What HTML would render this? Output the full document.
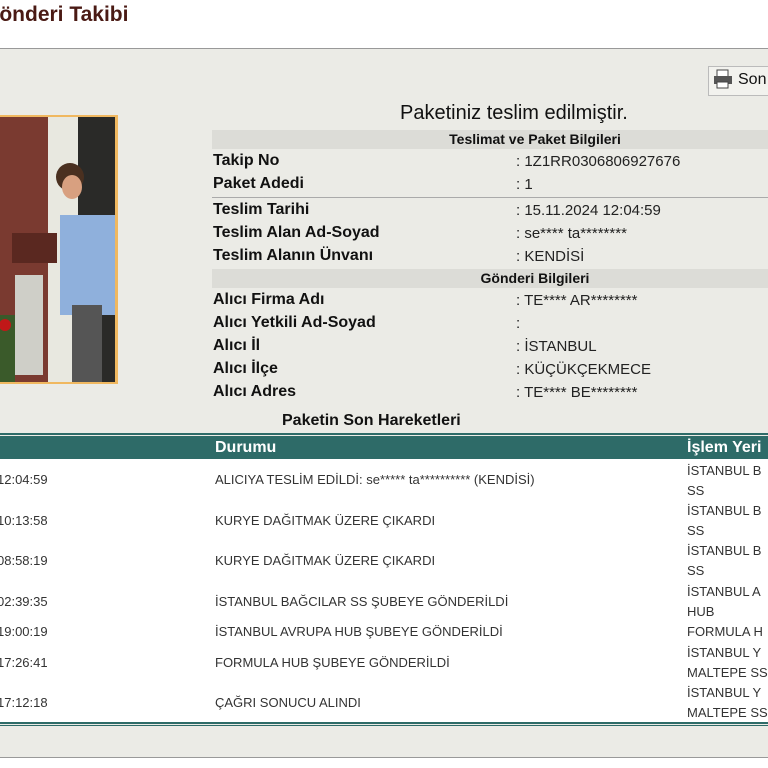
<!DOCTYPE html>
<html><head><meta charset="utf-8"><style>
*{margin:0;padding:0;box-sizing:border-box}
body{width:768px;height:768px;overflow:hidden;background:#fff;font-family:"Liberation Sans",sans-serif;position:relative;color:#111}
.a{position:absolute;white-space:nowrap}
h1{position:absolute;left:-17px;top:3px;font-size:21px;color:#4a1a14;font-weight:bold}
#main{position:absolute;left:0;top:48px;width:768px;height:710px;background:#ebebe6;border-top:1px solid #999;border-bottom:1px solid #999}
.lbl{font-size:16px;font-weight:bold;color:#111;left:213px}
.val{font-size:15px;color:#222;left:516px}
.bar{position:absolute;left:212px;width:556px;height:19px;background:#dcdcd7}
.bh{font-size:14px;font-weight:bold;left:212px;width:646px;text-align:center}
.t{font-size:13px;color:#333}
</style></head><body>
<h1>Gönderi Takibi</h1>
<div id="main"></div>
<div class="a" style="left:708px;top:66px;width:70px;height:30px;border:1px solid #bbb;background:#f2f2ee"></div>
<svg class="a" style="left:712px;top:68px" width="22" height="22" viewBox="0 0 22 22"><rect x="5" y="2" width="11" height="7" fill="#fff" stroke="#444"/><rect x="2" y="8" width="18" height="8" fill="#555"/><rect x="5" y="14" width="11" height="6" fill="#fff" stroke="#444"/></svg>
<div class="a" style="left:738px;top:71px;font-size:16px">Son</div>
<svg class="a" style="left:0;top:115px" width="118" height="269" viewBox="0 0 118 269">
<rect width="118" height="269" fill="#f0b860"/>
<rect x="0" y="2" width="115" height="265" fill="#7a3a30"/>
<rect x="48" y="2" width="30" height="265" fill="#e8e8e0"/>
<rect x="78" y="2" width="37" height="265" fill="#2a2a28"/>
<rect x="60" y="100" width="55" height="100" fill="#8fb0dc"/>
<rect x="72" y="190" width="30" height="77" fill="#555"/>
<circle cx="70" cy="62" r="14" fill="#4a3020"/>
<ellipse cx="72" cy="72" rx="10" ry="12" fill="#d8a080"/>
<rect x="12" y="118" width="45" height="30" fill="#5a2820"/>
<rect x="15" y="160" width="28" height="100" fill="#cfcfc8"/>
<rect x="0" y="200" width="15" height="67" fill="#3a5a2a"/>
<circle cx="5" cy="210" r="6" fill="#c01818"/>
</svg>
<div class="a" style="left:400px;top:102px;font-size:20px;color:#111">Paketiniz teslim edilmiştir.</div>
<div class="bar" style="top:130px"></div>
<div class="a bh" style="top:131px">Teslimat ve Paket Bilgileri</div>
<div class="a lbl" style="top:152px">Takip No</div><div class="a val" style="top:153px">: 1Z1RR0306806927676</div>
<div class="a lbl" style="top:175px">Paket Adedi</div><div class="a val" style="top:176px">: 1</div>
<div class="a" style="left:212px;top:197px;width:556px;height:1px;background:#aaa"></div>
<div class="a lbl" style="top:201px">Teslim Tarihi</div><div class="a val" style="top:202px">: 15.11.2024 12:04:59</div>
<div class="a lbl" style="top:224px">Teslim Alan Ad-Soyad</div><div class="a val" style="top:225px">: se**** ta********</div>
<div class="a lbl" style="top:247px">Teslim Alanın Ünvanı</div><div class="a val" style="top:248px">: KENDİSİ</div>
<div class="bar" style="top:269px"></div>
<div class="a bh" style="top:270px">Gönderi Bilgileri</div>
<div class="a lbl" style="top:291px">Alıcı Firma Adı</div><div class="a val" style="top:292px">: TE**** AR********</div>
<div class="a lbl" style="top:314px">Alıcı Yetkili Ad-Soyad</div><div class="a val" style="top:315px">:</div>
<div class="a lbl" style="top:337px">Alıcı İl</div><div class="a val" style="top:338px">: İSTANBUL</div>
<div class="a lbl" style="top:360px">Alıcı İlçe</div><div class="a val" style="top:361px">: KÜÇÜKÇEKMECE</div>
<div class="a lbl" style="top:383px">Alıcı Adres</div><div class="a val" style="top:384px">: TE**** BE********</div>
<div class="a" style="left:282px;top:412px;font-size:16px;font-weight:bold">Paketin Son Hareketleri</div>
<div class="a" style="left:0;top:433px;width:768px;height:2px;background:#2e6b68"></div>
<div class="a" style="left:0;top:436px;width:768px;height:23px;background:#2e6b68"></div>
<div class="a" style="left:215px;top:439px;font-size:16px;font-weight:bold;color:#fff">Durumu</div>
<div class="a" style="left:687px;top:439px;font-size:16px;font-weight:bold;color:#fff">İşlem Yeri</div>
<div class="a" style="left:0;top:459px;width:768px;height:263px;background:#fff"></div>
<div class="a" style="left:0;top:722px;width:768px;height:2px;background:#2e6b68"></div>
<div class="a" style="left:0;top:725px;width:768px;height:1px;background:#2e6b68"></div>
<div class="a t" style="left:-3px;top:472px">12:04:59</div><div class="a t" style="left:215px;top:472px">ALICIYA TESLİM EDİLDİ: se***** ta********** (KENDİSİ)</div><div class="a t" style="left:687px;top:461px;line-height:20px">İSTANBUL B<br>SS</div>
<div class="a t" style="left:-3px;top:513px">10:13:58</div><div class="a t" style="left:215px;top:513px">KURYE DAĞITMAK ÜZERE ÇIKARDI</div><div class="a t" style="left:687px;top:501px;line-height:20px">İSTANBUL B<br>SS</div>
<div class="a t" style="left:-3px;top:553px">08:58:19</div><div class="a t" style="left:215px;top:553px">KURYE DAĞITMAK ÜZERE ÇIKARDI</div><div class="a t" style="left:687px;top:541px;line-height:20px">İSTANBUL B<br>SS</div>
<div class="a t" style="left:-3px;top:594px">02:39:35</div><div class="a t" style="left:215px;top:594px">İSTANBUL BAĞCILAR SS ŞUBEYE GÖNDERİLDİ</div><div class="a t" style="left:687px;top:582px;line-height:20px">İSTANBUL A<br>HUB</div>
<div class="a t" style="left:-3px;top:624px">19:00:19</div><div class="a t" style="left:215px;top:624px">İSTANBUL AVRUPA HUB ŞUBEYE GÖNDERİLDİ</div><div class="a t" style="left:687px;top:624px">FORMULA H</div>
<div class="a t" style="left:-3px;top:655px">17:26:41</div><div class="a t" style="left:215px;top:655px">FORMULA HUB ŞUBEYE GÖNDERİLDİ</div><div class="a t" style="left:687px;top:643px;line-height:20px">İSTANBUL Y<br>MALTEPE SS</div>
<div class="a t" style="left:-3px;top:695px">17:12:18</div><div class="a t" style="left:215px;top:695px">ÇAĞRI SONUCU ALINDI</div><div class="a t" style="left:687px;top:683px;line-height:20px">İSTANBUL Y<br>MALTEPE SS</div>
</body></html>
